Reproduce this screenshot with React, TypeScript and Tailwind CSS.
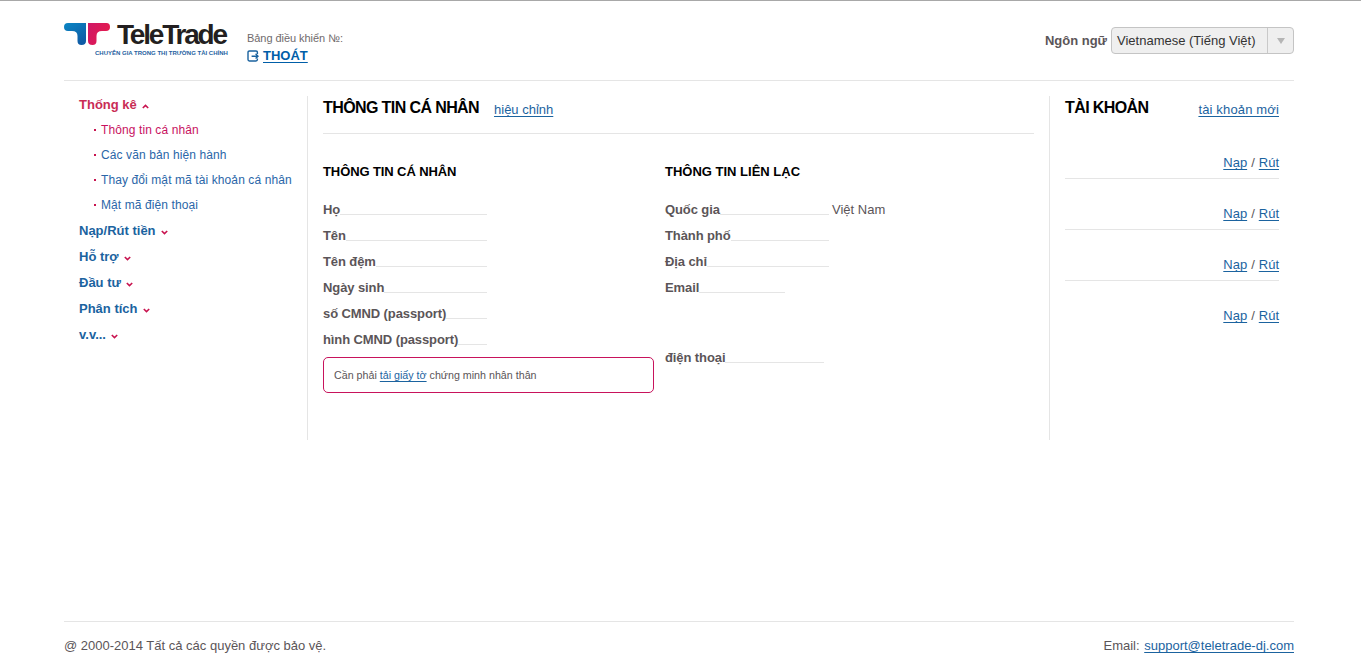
import React from "react";

const SANS = "font-['Liberation_Sans',Arial,sans-serif]";
const LINK = "text-[#1b639f] underline underline-offset-2 [text-decoration-skip-ink:none]";

interface FieldProps {
  label: string;
  width: number;
  value?: string;
}

const NAV_CHILDREN = [
  { label: "Thông tin cá nhân", active: true },
  { label: "Các văn bản hiện hành" },
  { label: "Thay đổi mật mã tài khoản cá nhân" },
  { label: "Mật mã điện thoại" },
];

const NAV_ITEMS = ["Nạp/Rút tiền", "Hỗ trợ", "Đầu tư", "Phân tích", "v.v..."];

const PERSONAL = ["Họ", "Tên", "Tên đệm", "Ngày sinh", "số CMND (passport)", "hình CMND (passport)"];

const Chevron = ({ up = false }: { up?: boolean }) => (
  <svg width="7" height="5" viewBox="0 0 7 5" className="ml-[5px] mt-[3px] shrink-0">
    <path
      d={up ? "M0.8 4 L3.5 1.4 L6.2 4" : "M0.8 1 L3.5 3.6 L6.2 1"}
      fill="none"
      stroke="#c8134f"
      strokeWidth="1.6"
    />
  </svg>
);

const Logo = () => (
  <div className="w-[164px] shrink-0">
    <div className="flex items-start h-[24px]">
      <svg width="47" height="23" viewBox="0 0 47 23" className="shrink-0">
        <defs>
          <linearGradient id="tt-blue" x1="0" y1="0" x2="0.6" y2="1">
            <stop offset="0" stopColor="#0a86c4" />
            <stop offset="1" stopColor="#0f5ca6" />
          </linearGradient>
          <linearGradient id="tt-red" x1="0" y1="0" x2="1" y2="0.4">
            <stop offset="0" stopColor="#cf1767" />
            <stop offset="1" stopColor="#e41c4f" />
          </linearGradient>
        </defs>
        <path
          d="M4 0 H22 V18 Q22 22 17.5 22 Q13.5 22 13.5 18 V13 Q13.5 8 8 8 H4 Q0 8 0 4 Q0 0 4 0 Z"
          fill="url(#tt-blue)"
        />
        <path
          d="M24 0 H42.5 Q46 0 46 4 Q46 8 42 8 H38 Q32.5 8 32.5 13 V18 Q32.5 22 28.5 22 Q24 22 24 18 Z"
          fill="url(#tt-red)"
        />
      </svg>
      <span className={`${SANS} ml-[6px] -mt-[2px] text-[28px] leading-[28px] font-bold tracking-[-2.2px] text-[#231f20]`}>
        TeleTrade
      </span>
    </div>
    <div className={`${SANS} mt-[2px] pl-[31px] text-[6px] leading-[8px] font-bold whitespace-nowrap text-[#1f5f9f]`}>
      CHUYÊN GIA TRONG THỊ TRƯỜNG TÀI CHÍNH
    </div>
  </div>
);

const Field = ({ label, width, value }: FieldProps) => (
  <div className="flex h-[26px] items-start">
    <div className="flex shrink-0" style={{ width }}>
      <span className="text-[13px] leading-[19px] font-bold tracking-[-0.1px] text-[#5b5558] whitespace-nowrap">
        {label}
      </span>
      <span className="h-[15px] flex-1 border-b border-[#e5e5e5]" />
    </div>
    {value && <span className="ml-[3px] text-[13px] leading-[19px] text-[#5b5558]">{value}</span>}
  </div>
);

const AccountRow = ({ last = false }: { last?: boolean }) => (
  <div className={`flex h-[51px] justify-end pt-[25px] text-[13px] leading-[19px] text-[#5b5558] ${last ? "" : "border-b border-[#e5e5e5]"}`}>
    <a className={LINK}>Nạp</a>
    <span className="mx-[4px]">/</span>
    <a className={LINK}>Rút</a>
  </div>
);

export default function App() {
  return (
    <div className={`${SANS} h-[663px] bg-white border-t border-[#a8a8a8] overflow-hidden flex flex-col`}>
      <div className="ml-[64px] mr-[67px] flex-1 flex flex-col">
        {/* Header */}
        <header className="flex h-[80px] items-start border-b border-[#e5e5e5] pt-[22px]">
          <Logo />
          <div className="ml-[19px] pt-[9px]">
            <div className="text-[11px] leading-[13px] tracking-[-0.05px] text-[#6f6a6c]">Bảng điều khiển №:</div>
            <div className="mt-[2px] flex items-center">
              <svg width="12" height="12" viewBox="0 0 12 12" fill="none" stroke="#1b639f" strokeWidth="1.4">
                <path d="M10.4 4 V2.4 Q10.4 1 9 1 H2.4 Q1 1 1 2.4 V9.6 Q1 11 2.4 11 H9 Q10.4 11 10.4 9.6 V8.6" />
                <path d="M4.6 6.2 H11 M8.6 3.8 L11 6.2 L8.6 8.6" />
              </svg>
              <a className="ml-[4px] text-[13px] leading-[18px] font-bold text-[#005ea8] underline underline-offset-2 [text-decoration-skip-ink:none]">
                THOÁT
              </a>
            </div>
          </div>
          <div className="ml-auto flex items-center pt-[4px]">
            <span className="mr-[4px] text-[13px] font-bold text-[#5b5558]">Ngôn ngữ</span>
            <div className="flex h-[27px] w-[183px] rounded-[4px] border border-[#c4c4c4] bg-[#efefef]">
              <span className="flex-1 pl-[5px] text-[13px] leading-[25px] text-[#333] whitespace-nowrap">
                Vietnamese (Tiếng Việt)
              </span>
              <span className="flex w-[26px] items-center justify-center border-l border-[#c9c9c9]">
                <span className="mt-[1px] h-0 w-0 border-x-[4px] border-t-[6px] border-x-transparent border-t-[#b5b5b5]" />
              </span>
            </div>
          </div>
        </header>

        {/* Body */}
        <main className="mt-[15px] flex h-[344px]">
          <nav className="w-[244px] shrink-0 border-r border-[#e5e5e5] pl-[15px]">
            <div className="flex h-[17px] items-center text-[13px] font-bold text-[#c92c55]">
              Thống kê
              <Chevron up />
            </div>
            <ul className="mt-[4px] mb-[1px]">
              {NAV_CHILDREN.map((item) => (
                <li key={item.label} className="flex h-[25px] items-center text-[12px] tracking-[0.1px] whitespace-nowrap">
                  <span className="ml-[15px] mr-[5px] h-[2px] w-[2px] bg-[#c8134f]" />
                  <a className={item.active ? "text-[#c8125f]" : "text-[#2a66a8]"}>{item.label}</a>
                </li>
              ))}
            </ul>
            {NAV_ITEMS.map((label) => (
              <div key={label} className="flex h-[26px] items-center text-[13px] font-bold text-[#1b639f]">
                {label}
                <Chevron />
              </div>
            ))}
          </nav>

          <section className="w-[742px] shrink-0 border-r border-[#e5e5e5] px-[15px]">
            <div className="flex h-[38px] items-start border-b border-[#e5e5e5]">
              <h1 className="text-[16px] leading-[23px] font-bold tracking-[-0.6px] text-black">THÔNG TIN CÁ NHÂN</h1>
              <a className={`ml-[15px] mt-[4px] text-[13px] leading-[19px] ${LINK}`}>hiệu chỉnh</a>
            </div>
            <div className="mt-[29px] flex">
              <div className="w-[342px] shrink-0">
                <h2 className="text-[13px] leading-[18px] font-bold tracking-[-0.1px] text-black">THÔNG TIN CÁ NHÂN</h2>
                <div className="mt-[19px]">
                  {PERSONAL.map((label) => (
                    <Field key={label} label={label} width={164} />
                  ))}
                </div>
                <div className="mt-[1px] flex h-[36px] w-[331px] items-center rounded-[5px] border border-[#c8135c] pl-[10px] text-[10.7px] text-[#5b5558]">
                  <span>
                    Cần phải <a className={LINK}>tải giấy tờ</a> chứng minh nhân thân
                  </span>
                </div>
              </div>
              <div className="flex-1">
                <h2 className="text-[13px] leading-[18px] font-bold text-black">THÔNG TIN LIÊN LẠC</h2>
                <div className="mt-[19px]">
                  <Field label="Quốc gia" width={164} value="Việt Nam" />
                  <Field label="Thành phố" width={164} />
                  <Field label="Địa chỉ" width={164} />
                  <Field label="Email" width={120} />
                  <div className="h-[44px]" />
                  <Field label="điện thoại" width={159} />
                </div>
              </div>
            </div>
          </section>

          <aside className="flex-1 px-[15px]">
            <div className="flex h-[32px] items-start justify-between">
              <h1 className="text-[16px] leading-[23px] font-bold tracking-[-0.6px] text-black">TÀI KHOẢN</h1>
              <a className={`mt-[4px] text-[13px] leading-[19px] tracking-[0.15px] ${LINK}`}>tài khoản mới</a>
            </div>
            <AccountRow />
            <AccountRow />
            <AccountRow />
            <AccountRow last />
          </aside>
        </main>

        {/* Footer */}
        <footer className="mt-auto mb-[8px] flex h-[34px] items-end justify-between border-t border-[#e5e5e5] text-[13px] leading-[19px] text-[#5b5558]">
          <span>@ 2000-2014 Tất cả các quyền được bảo vệ.</span>
          <span>
            Email: <a className={`ml-[1px] ${LINK}`}>support@teletrade-dj.com</a>
          </span>
        </footer>
      </div>
    </div>
  );
}
